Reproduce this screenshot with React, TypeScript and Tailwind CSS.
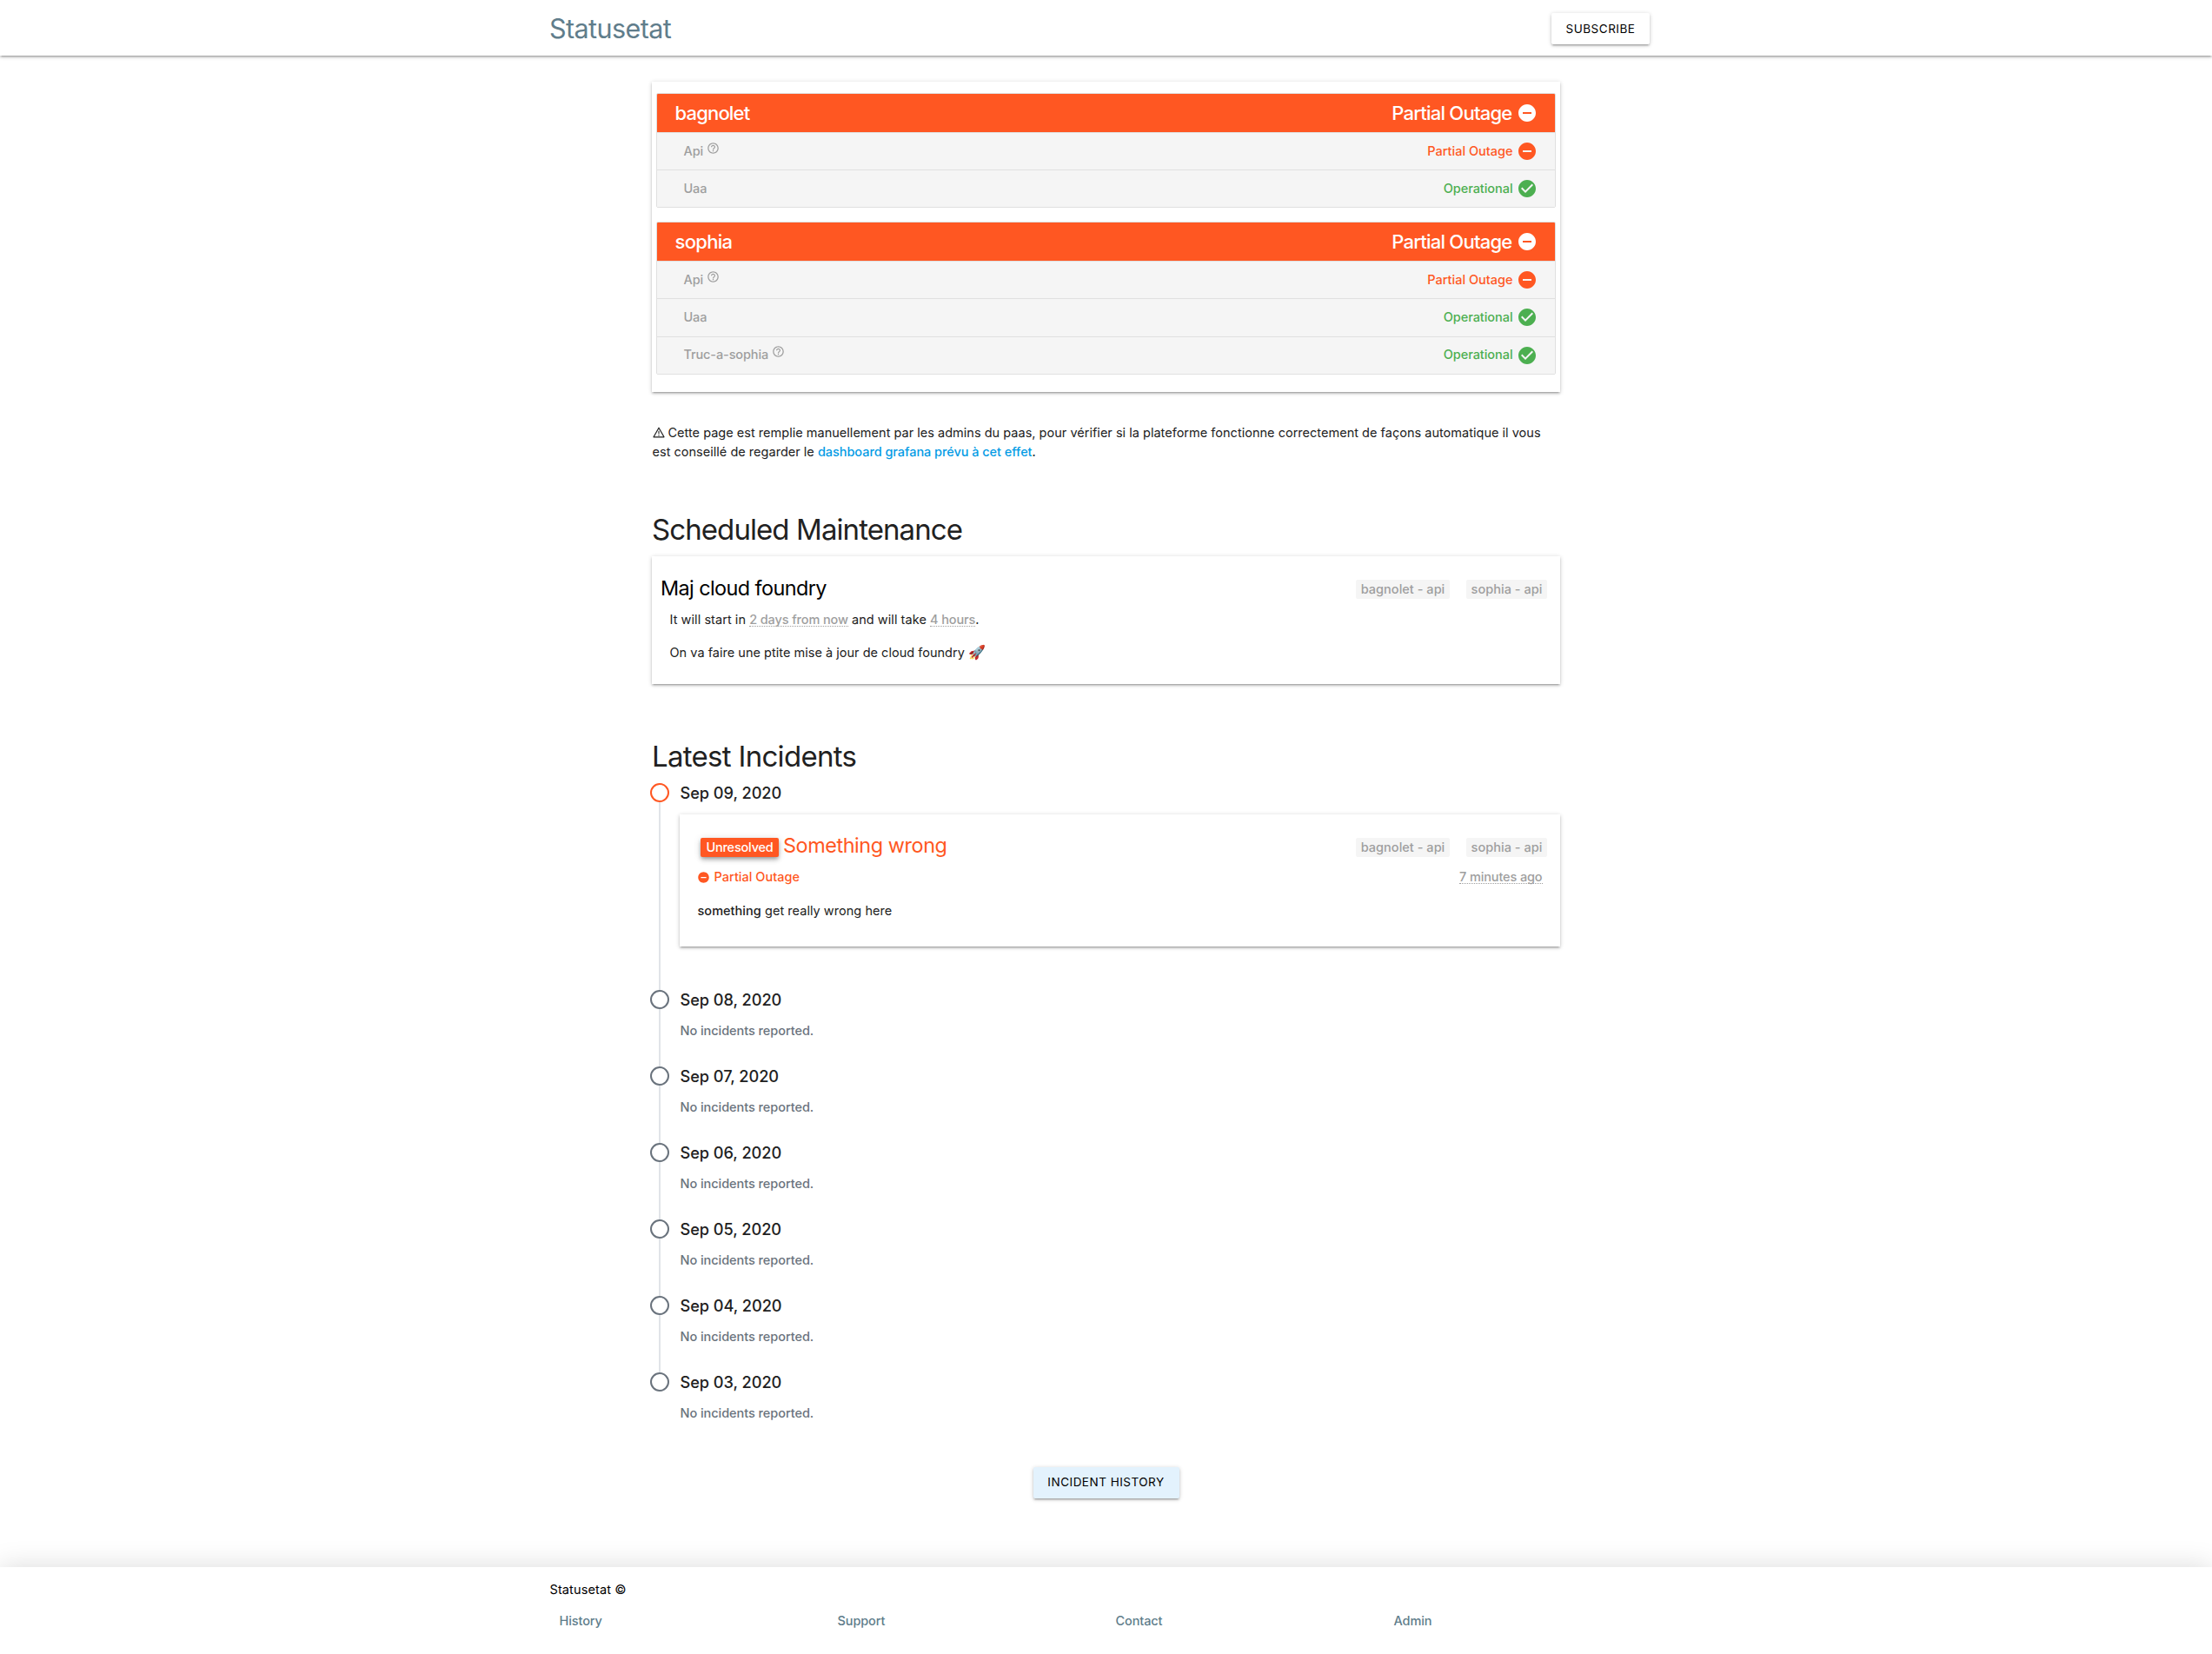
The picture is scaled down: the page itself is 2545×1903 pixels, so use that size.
import type { ReactNode } from "react";
import { MdCheckCircle, MdHelpOutline, MdRemoveCircle } from "react-icons/md";

type Status = "partial" | "ok";
type Component = { name: string; help?: boolean; status: Status };
type Region = { name: string; spacing: string; components: Component[] };

const regions: Region[] = [
  {
    name: "bagnolet",
    spacing: "tracking-[-0.82px]",
    components: [
      { name: "Api", help: true, status: "partial" },
      { name: "Uaa", status: "ok" },
    ],
  },
  {
    name: "sophia",
    spacing: "tracking-[-0.68px]",
    components: [
      { name: "Api", help: true, status: "partial" },
      { name: "Uaa", status: "ok" },
      { name: "Truc-a-sophia", help: true, status: "ok" },
    ],
  },
];

const quietDays = ["Sep 08, 2020", "Sep 07, 2020", "Sep 06, 2020", "Sep 05, 2020", "Sep 04, 2020", "Sep 03, 2020"];
const footerLinks = ["History", "Support", "Contact", "Admin"];

function Card({ className, children }: { className: string; children: ReactNode }) {
  return (
    <div
      className={`bg-white shadow-[0_2px_2px_0_rgba(0,0,0,0.14),0_3px_1px_-2px_rgba(0,0,0,0.12),0_1px_5px_0_rgba(0,0,0,0.2)] ${className}`}
    >
      {children}
    </div>
  );
}

function Button({ className, children }: { className: string; children: ReactNode }) {
  return (
    <button
      className={`flex items-center justify-center rounded-[2px] text-[13.5px] tracking-[0.5px] text-black shadow-[0_2px_2px_0_rgba(0,0,0,0.14),0_3px_1px_-2px_rgba(0,0,0,0.12),0_1px_5px_0_rgba(0,0,0,0.2)] ${className}`}
    >
      {children}
    </button>
  );
}

function RegionTable({ region }: { region: Region }) {
  return (
    <div className="mb-[15.5px] overflow-hidden rounded-[2px] border border-[#e0e0e0]">
      <div className="flex h-[45px] items-center justify-between border-b border-[#e0e0e0] bg-[#ff5722] pr-[20.5px] pl-[20.5px] text-[22px] font-medium text-white">
        <span className={region.spacing}>{region.name}</span>
        <span className="flex items-center gap-[5px]">
          <span className="tracking-[-0.77px]">Partial Outage</span>
          <MdRemoveCircle className="size-6" />
        </span>
      </div>
      {region.components.map((c) => (
        <div
          key={c.name}
          className="flex h-[43.3px] items-center justify-between border-b border-[#e0e0e0] bg-[#f5f5f5] pr-[20.5px] pl-[30.5px] font-medium last:h-[42.2px] last:border-b-0"
        >
          <span className="flex items-center gap-[4px] text-[#9e9e9e]">
            <span className="tracking-[-0.12px]">{c.name}</span>
            {c.help && <MdHelpOutline className="mb-2 size-[15px]" />}
          </span>
          {c.status === "partial" ? (
            <span className="flex items-center gap-[4px] text-[#ff5722]">
              <span className="tracking-normal">Partial Outage</span>
              <MdRemoveCircle className="size-6" />
            </span>
          ) : (
            <span className="flex items-center gap-[4px] text-[#4caf50]">
              Operational
              <MdCheckCircle className="size-6" />
            </span>
          )}
        </div>
      ))}
    </div>
  );
}

function Tags() {
  return (
    <div className="flex gap-[19px] text-center font-medium tracking-[0.03px] text-[#9e9e9e]">
      <span className="h-[22px] w-[108px] rounded-[2px] bg-[#f5f5f5] leading-[22px]">bagnolet - api</span>
      <span className="h-[22px] w-[93px] rounded-[2px] bg-[#f5f5f5] leading-[22px]">sophia - api</span>
    </div>
  );
}

function Dotted({ children }: { children: ReactNode }) {
  return (
    <abbr className="inline-block h-[19px] border-b border-dotted border-[#9e9e9e] font-medium leading-[22.5px] tracking-[-0.12px] text-[#9e9e9e] no-underline">
      {children}
    </abbr>
  );
}

function WarningIcon() {
  return (
    <svg viewBox="0 0 14 13" className="mr-[4px] inline-block h-[13px] w-[14px] align-[-1px]" fill="none" stroke="currentColor" strokeLinejoin="round">
      <path d="M7 1.2 L13 11.8 H1 Z" strokeWidth="1.2" />
      <path d="M7 4.8 V8.2 M7 9.3 V10.5" strokeWidth="1.1" />
    </svg>
  );
}

function TimelineItem({ date, active, last, className, children }: { date: string; active?: boolean; last?: boolean; className: string; children: ReactNode }) {
  return (
    <div className={`flex ${className}`}>
      <div className="flex w-[22px] shrink-0 flex-col items-center">
        <div className={`size-[22px] shrink-0 rounded-full border-2 ${active ? "border-[#ff5722]" : "border-[#6a737d]"}`} />
        {!last && <div className="w-[2px] flex-1 bg-[#e1e4e8]" />}
      </div>
      <div className="ml-3 flex-1">
        <div className="h-[22px] pl-[0.5px] text-[18.2px] font-medium leading-[22.5px] tracking-[-0.05px]">{date}</div>
        {children}
      </div>
    </div>
  );
}

export default function App() {
  return (
    <div className="flex h-[1903px] flex-col overflow-hidden bg-white font-['Inter',sans-serif] text-[14.5px] leading-[22.5px] tracking-[-0.05px] text-[#212121]">
      <header className="h-16 shrink-0 bg-white shadow-[0_2px_2px_0_rgba(0,0,0,0.14),0_3px_1px_-2px_rgba(0,0,0,0.12),0_1px_5px_0_rgba(0,0,0,0.2)]">
        <div className="mx-auto flex h-full w-[1281px] items-center justify-between pr-[15px]">
          <span className="mt-[2px] text-[30.5px] font-normal tracking-[-0.57px] text-[#607d8b]">Statusetat</span>
          <Button className="mt-[2px] h-9 w-[113px] bg-white">SUBSCRIBE</Button>
        </div>
      </header>

      <main className="mx-auto w-[1045px] shrink-0 pt-[29.5px]">
        <Card className="h-[357.5px] px-[5px] pt-[13.5px]">
          {regions.map((r) => (
            <RegionTable key={r.name} region={r} />
          ))}
        </Card>

        <p className="mt-[35.5px] h-[45px] pl-[0.5px] tracking-[0.018px]">
          <WarningIcon />
          Cette page est remplie manuellement par les admins du paas, pour vérifier si la plateforme fonctionne correctement de façons automatique il vous
          <br />
          est conseillé de regarder le <a className="font-medium tracking-[-0.05px] text-[#039be5]">dashboard grafana prévu à cet effet</a>.
        </p>

        <h2 className="mt-[57px] h-10 text-[33px] leading-10 tracking-[-0.92px]">Scheduled Maintenance</h2>
        <Card className="mt-[11px] h-[147.5px] pt-[23px]">
          <div className="flex h-[30px] items-center justify-between pr-[15px] pl-[10px]">
            <h3 className="text-[23.4px] tracking-[-0.57px] text-black">Maj cloud foundry</h3>
            <Tags />
          </div>
          <p className="mt-[9px] h-[22.5px] pl-[20.5px] tracking-[0.06px]">
            It will start in <Dotted>2 days from now</Dotted> and will take <Dotted>4 hours</Dotted>.
          </p>
          <p className="mt-[15.5px] h-[22.5px] pl-[20.5px] tracking-[0.02px]">
            On va faire une ptite mise à jour de cloud foundry <span className="text-[16px] leading-none">🚀</span>
          </p>
        </Card>

        <h2 className="mt-[62.5px] h-10 text-[33px] leading-10 tracking-[-0.7px]">Latest Incidents</h2>
        <section className="-ml-[2px] pt-[11px]">
          <TimelineItem date="Sep 09, 2020" active className="h-[238.2px]">
            <Card className="mt-[14px] h-[152px] pt-[22px]">
              <div className="flex h-[30px] items-center justify-between pr-[15px] pl-6">
                <h3 className="flex items-center gap-[5px] text-[#ff5722]">
                  <span className="mt-[3px] h-[22px] w-[90px] rounded-[2px] bg-[#ff5722] text-center font-medium leading-[22px] tracking-[-0.2px] text-white shadow-[0_4px_5px_0_rgba(0,0,0,0.14),0_1px_10px_0_rgba(0,0,0,0.12),0_2px_4px_-1px_rgba(0,0,0,0.3)]">
                    Unresolved
                  </span>
                  <span className="text-[23.4px] tracking-[-0.42px]">Something wrong</span>
                </h3>
                <div className="mt-[2px]">
                  <Tags />
                </div>
              </div>
              <div className="mt-[9.5px] flex h-[22.5px] items-center justify-between pr-[20.5px] pl-5">
                <span className="flex items-center gap-[4.5px] font-medium tracking-[0.02px] text-[#ff5722]">
                  <MdRemoveCircle className="size-[15px]" />
                  Partial Outage
                </span>
                <span className="-mt-[4px] flex">
                  <Dotted>7 minutes ago</Dotted>
                </span>
              </div>
              <p className="mt-[16px] h-[22.5px] pl-[20.5px] tracking-[0.04px]">
                <span className="font-medium">something</span> get really wrong here
              </p>
            </Card>
          </TimelineItem>
          {quietDays.map((d, i) => (
            <TimelineItem key={d} date={d} last={i === quietDays.length - 1} className="h-[88.1px]">
              <p className="mt-[14.3px] pl-[0.5px] font-medium text-[#6a737d]">No incidents reported.</p>
            </TimelineItem>
          ))}
        </section>
        <div className="mt-[20.3px] flex justify-center">
          <Button className="h-9 w-[168px] bg-[#e3f2fd]">INCIDENT HISTORY</Button>
        </div>
      </main>

      <footer className="mt-auto h-[100px] shrink-0 bg-white pt-[14.5px] shadow-[0_0_30px_rgba(0,0,0,0.15)]">
        <div className="mx-auto w-[1280px]">
          <p className="tracking-[0.12px] text-black">Statusetat ©</p>
          <div className="mt-[13.5px] grid grid-cols-4 font-medium text-[#607d8b]">
            {footerLinks.map((l) => (
              <a key={l} className="pl-[11px] tracking-[-0.1px]">
                {l}
              </a>
            ))}
          </div>
        </div>
      </footer>
    </div>
  );
}
